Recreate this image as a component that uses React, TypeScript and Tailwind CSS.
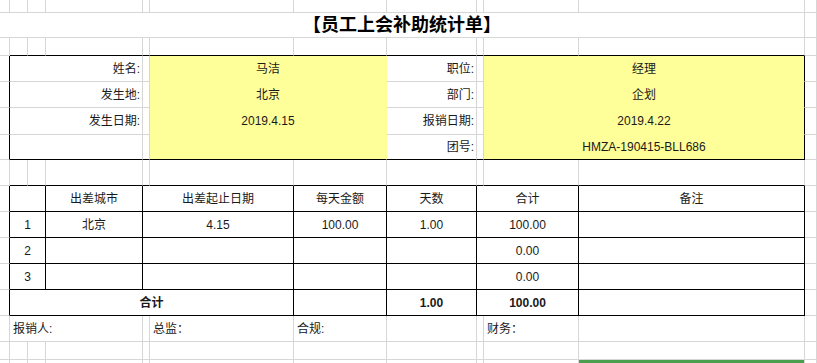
import React from 'react';

type Cell = {
  s?: number;
  t?: string;
  a?: 'l' | 'r' | 'c';
  b?: boolean;
  y?: boolean;
  R?: boolean;
  B?: boolean;
  title?: boolean;
  green?: boolean;
};

const span: Record<number, string> = {
  1: '',
  2: 'col-span-2',
  3: 'col-span-3',
  5: 'col-span-5',
  11: 'col-span-11',
};

const blank = (n: number, c: Cell = {}): Cell[] => Array.from({ length: n }, () => ({ ...c }));

const infoRow = (l1: string, v1: string, l2: string, v2: string, last = false): Cell[] => [
  { R: true },
  { s: 3, t: l1, a: 'r', B: last },
  { B: last },
  { s: 2, t: v1, y: true, B: last },
  { t: l2, a: 'r', B: last },
  { B: last },
  { s: 2, t: v2, y: true, R: true, B: last },
  {},
];

const listRow = (vals: string[], bold = false): Cell[] => [
  { R: true },
  { s: 2, t: vals[0], R: true, B: true, b: bold },
  { t: vals[1], R: true, B: true, b: bold },
  { s: 2, t: vals[2], R: true, B: true, b: bold },
  { t: vals[3], R: true, B: true, b: bold },
  { t: vals[4], R: true, B: true, b: bold },
  { s: 2, t: vals[5], R: true, B: true, b: bold },
  { t: vals[6], R: true, B: true, b: bold },
  {},
];

const rows: Cell[][] = [
  blank(12),
  [{ s: 11, t: '【员工上会补助统计单】', title: true }, {}],
  [{}, ...blank(10, { B: true }), {}],
  infoRow('姓名:', '马洁', '职位:', '经理'),
  infoRow('发生地:', '北京', '部门:', '企划'),
  infoRow('发生日期:', '2019.4.15', '报销日期:', '2019.4.22'),
  infoRow('', '', '团号:', 'HMZA-190415-BLL686', true),
  [{}, ...blank(10, { B: true }), {}],
  listRow(['', '出差城市', '出差起止日期', '每天金额', '天数', '合计', '备注']),
  listRow(['1', '北京', '4.15', '100.00', '1.00', '100.00', '']),
  listRow(['2', '', '', '', '', '0.00', '']),
  listRow(['3', '', '', '', '', '0.00', '']),
  [
    { R: true },
    { s: 5, t: '合计', R: true, B: true, b: true },
    { R: true, B: true },
    { t: '1.00', R: true, B: true, b: true },
    { s: 2, t: '100.00', R: true, B: true, b: true },
    { R: true, B: true },
    {},
  ],
  [
    {},
    { s: 3, t: '报销人:', a: 'l' },
    {},
    { t: '总监：', a: 'l' },
    { t: '合规:', a: 'l' },
    {},
    {},
    { t: '财务：', a: 'l' },
    {},
    {},
  ],
  blank(12),
  [...blank(10), { green: true }, {}],
];

function SheetCell({ c }: { c: Cell }) {
  const right = c.R ? 'border-r-black' : c.y ? 'border-r-[#ffff99]' : 'border-r-[#d6d6d6]';
  const bottom = c.B ? 'border-b-black' : c.y ? 'border-b-[#ffff99]' : 'border-b-[#d6d6d6]';
  const align = c.a === 'r' ? 'justify-end pr-[2px]' : c.a === 'l' ? 'justify-start pl-[3px]' : 'justify-center';
  return (
    <div
      className={`${span[c.s ?? 1]} flex items-center whitespace-nowrap overflow-hidden border-r border-b ${right} ${bottom} ${align} ${
        c.y ? 'bg-[#ffff99]' : 'bg-white'
      } ${c.b ? 'font-bold' : ''} ${c.title ? 'text-[18px] font-bold text-black' : 'text-[12px]'}`}
    >
      {c.green ? <div className="self-start h-[3px] w-full bg-[#4a9f4f]" /> : c.t}
    </div>
  );
}

export default function App() {
  return (
    <div className="w-[817px] h-[363px] overflow-hidden bg-white text-[#1a1a1a] font-['Liberation_Sans','Noto_Sans_CJK_SC',sans-serif]">
      <div className="grid grid-cols-[10px_18px_18px_97px_7px_144px_93px_90px_7px_95px_226px_12px] grid-rows-[13px_25px_18px_26px_26px_27px_25px_26px_26px_26px_26px_26px_26px_26px_18px_10px]">
        {rows.map((row, i) => row.map((c, j) => <SheetCell key={`${i}-${j}`} c={c} />))}
      </div>
    </div>
  );
}
